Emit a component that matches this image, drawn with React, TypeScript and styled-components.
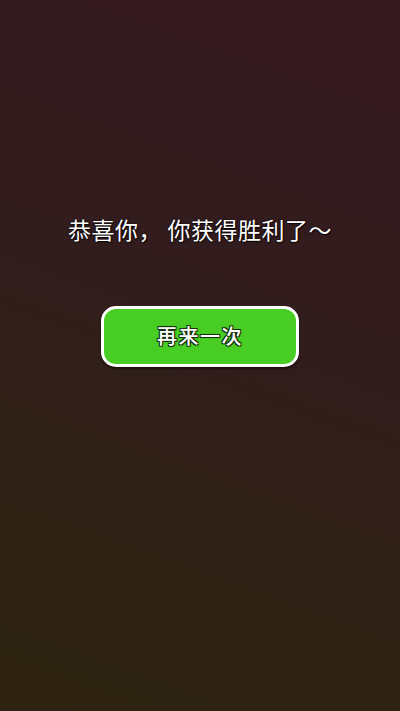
import React from "react";
import styled, { createGlobalStyle } from "styled-components";

const GlobalStyle = createGlobalStyle`
  html, body {
    margin: 0;
    padding: 0;
    height: 100%;
  }
  body {
    font-family: "Noto Sans CJK SC", "Noto Sans", sans-serif;
  }
`;

const Screen = styled.div`
  width: 400px;
  height: 711px;
  box-sizing: border-box;
  background: linear-gradient(200deg, #351920 0%, #321c1d 40%, #2f2314 80%, #2e2410 100%);
  display: flex;
  flex-direction: column;
  align-items: center;
  padding-top: 210px;
`;

const Message = styled.div`
  color: #ffffff;
  font-size: 23px;
  line-height: 38px;
  letter-spacing: 0.5px;
  white-space: pre;
  text-shadow: 0 0 2px rgba(0, 0, 0, 0.9), 1px 1px 1px rgba(0, 0, 0, 0.8);
`;

const RetryButton = styled.button`
  margin-top: 58px;
  width: 198px;
  height: 61px;
  box-sizing: border-box;
  border: 3px solid #ffffff;
  border-radius: 15px;
  background: #48cd25;
  box-shadow: 0 2px 2px rgba(0, 0, 0, 0.5);
  display: flex;
  align-items: center;
  justify-content: center;
  color: #ffffff;
  font-family: "Noto Sans CJK SC", "Noto Sans", sans-serif;
  font-size: 20px;
  font-weight: 500;
  letter-spacing: 1.5px;
  padding: 0 0 2px 0;
  cursor: pointer;
  text-shadow: -1px -1px 0 #14300c, 1px -1px 0 #14300c, -1px 1px 0 #14300c,
    1px 1px 0 #14300c, 0 0 2px #14300c;
`;

export default function App() {
  return (
    <>
      <GlobalStyle />
      <Screen>
        <Message>恭喜你， 你获得胜利了～</Message>
        <RetryButton>再来一次</RetryButton>
      </Screen>
    </>
  );
}
